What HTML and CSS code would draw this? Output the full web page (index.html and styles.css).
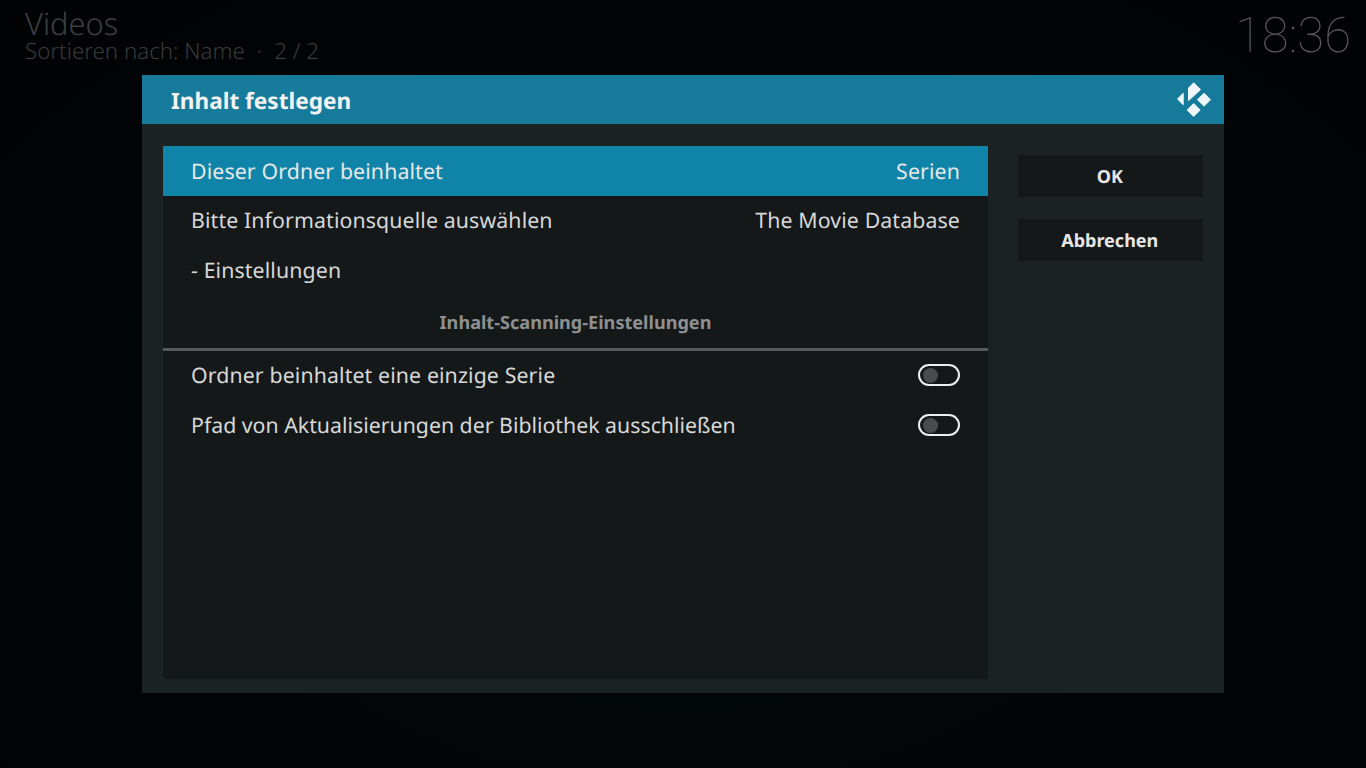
FILE: index.html
```html
<!DOCTYPE html>
<html lang="de">
	<head>
		<meta charset="UTF-8" />
		<title>Inhalt festlegen</title>
		<link rel="stylesheet" href="styles.css">
	</head>
	<body>
		<div class="top-bar">
			<div class="crumbs">
				<div class="crumbs-title">Videos</div>
				<div class="crumbs-sub">Sortieren nach: Name<span class="dot">·</span>2 / 2</div>
			</div>
			<div class="clock">18:36</div>
		</div>

		<div class="dialog">
			<div class="dialog-head">
				<div class="dialog-title">Inhalt festlegen</div>
				<svg class="logo" width="36" height="36" viewBox="0 0 36 36">
					<g fill="#eef6fa" stroke="#eef6fa" stroke-width="1" stroke-linejoin="round">
						<path d="M1.5 17 L7.2 11.3 V22.7 Z" />
						<path d="M12.5 6 L17.7 .8 L24.6 7.6 L12.5 18.6 Z" />
						<path d="M28 11.2 L34.5 17.7 L28 24.2 L21.5 17.7 Z" />
						<path d="M17.7 21.5 L24.2 28 L17.7 34.5 L11.2 28 Z" />
					</g>
				</svg>
			</div>
			<div class="dialog-body">
				<div class="list">
					<div class="row selected">
						<span>Dieser Ordner beinhaltet</span>
						<span>Serien</span>
					</div>
					<div class="row">
						<span>Bitte Informationsquelle auswählen</span>
						<span>The Movie Database</span>
					</div>
					<div class="row">
						<span>- Einstellungen</span>
					</div>
					<div class="section">Inhalt-Scanning-Einstellungen</div>
					<div class="row">
						<span>Ordner beinhaltet eine einzige Serie</span>
						<span class="toggle"><span class="knob"></span></span>
					</div>
					<div class="row tight">
						<span>Pfad von Aktualisierungen der Bibliothek ausschließen</span>
						<span class="toggle"><span class="knob"></span></span>
					</div>
				</div>
				<div class="side">
					<div class="btn">OK</div>
					<div class="btn">Abbrechen</div>
				</div>
			</div>
		</div>
	</body>
</html>
```

FILE: styles.css
```css
html, body {
	height: 100%;
}

body {
	margin: 0;
	height: 768px;
	overflow: hidden;
	background: radial-gradient(ellipse at 50% 60%, #03090c 0%, #020507 60%, #010203 100%);
	font-family: "Noto Sans", sans-serif;
	color: #e6e6e6;
	text-rendering: geometricPrecision;
}

.top-bar {
	display: flex;
	justify-content: space-between;
	padding: 6px 15px 0 25px;
}

.crumbs-title {
	font-size: 30.8px;
	font-weight: 300;
	line-height: 36px;
	color: #3c3f40;
}

.crumbs-sub {
	font-size: 22.3px;
	font-weight: 300;
	line-height: 18px;
	color: #383b3c;
}

.dot {
	margin: 0 12px;
}

.clock {
	font-family: "Roboto", sans-serif;
	font-size: 49px;
	font-weight: 100;
	line-height: 59px;
	color: #55585a;
}

/* sits over the window behind it */
.dialog {
	position: absolute;
	left: 142px;
	top: 75px;
	width: 1082px;
	height: 618px;
	display: flex;
	flex-direction: column;
	background: #1b2224;
}

.dialog-head {
	display: flex;
	justify-content: space-between;
	align-items: center;
	height: 49px;
	flex-shrink: 0;
	padding: 0 12px 0 29px;
	background: #167b9b;
}

.dialog-title {
	margin-top: 2px;
	font-size: 22.6px;
	font-weight: 700;
	color: #f2f2f2;
}

.logo {
	display: block;
	margin-top: 1px;
}

.dialog-body {
	display: flex;
	flex: 1;
	padding: 22px 21px 14px 21px;
}

.list {
	width: 825px;
	background: #151819;
	border-radius: 2px;
}

.row {
	display: flex;
	justify-content: space-between;
	align-items: center;
	box-sizing: border-box;
	height: 50px;
	padding: 0 28px 2px 28px;
	font-size: 21.3px;
	letter-spacing: .12px;
	color: #d8d8d8;
}

.row.selected {
	padding-bottom: 0;
	background: #0f84a8;
	color: #e8e8e8;
}

.row.tight {
	letter-spacing: 0;
}

.section {
	height: 52px;
	line-height: 54px;
	text-align: center;
	font-size: 18.1px;
	font-weight: 700;
	color: #8e9091;
	border-bottom: 3px solid #565859;
}

.toggle {
	display: flex;
	align-items: center;
	box-sizing: border-box;
	width: 42px;
	height: 22px;
	padding-left: 3px;
	border: 2px solid #eeeeee;
	border-radius: 11px;
}

.knob {
	width: 15px;
	height: 15px;
	border-radius: 50%;
	background: #4a4b4c;
}

.side {
	display: flex;
	flex-direction: column;
	gap: 22px;
	margin-left: 30px;
	padding-top: 9px;
	width: 184.5px;
}

.btn {
	box-sizing: border-box;
	height: 42px;
	padding-right: 1px;
	line-height: 44px;
	text-align: center;
	font-size: 18px;
	font-weight: 700;
	color: #e6e6e6;
	background: #151819;
	border-radius: 2px;
}
```
